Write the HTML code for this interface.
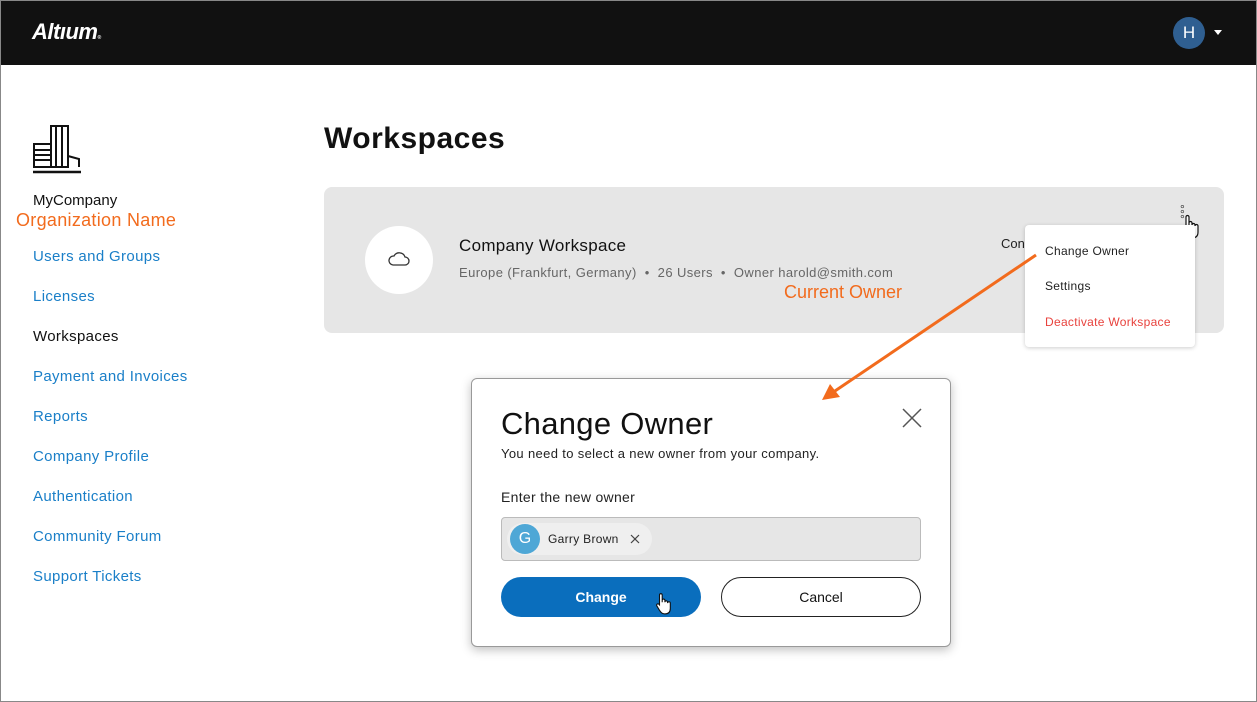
<!DOCTYPE html>
<html><head><style>
body{margin:0;width:1257px;height:702px;position:relative;overflow:hidden;font-family:"Liberation Sans",sans-serif;background:#fff}
.frame{position:absolute;inset:0;border:1px solid #888;pointer-events:none;z-index:10}
.top{position:absolute;left:0;top:0;width:1257px;height:65px;background:#111}
.a{position:absolute}
.nav{position:absolute;left:33px;font-size:15px;color:#1a7fc8;letter-spacing:0.35px}
</style></head><body>
<div class="frame"></div>
<div class="top">
<div class="a" style="left:32px;top:19px;color:#fff;font-size:22px;font-weight:bold;font-style:italic;letter-spacing:-0.5px">Altıum<span style="font-size:5px">®</span></div>
<div class="a" style="left:1173px;top:17px;width:32px;height:32px;border-radius:50%;background:#2f5f91;color:#fff;font-size:17px;text-align:center;line-height:32px">H</div>
<div class="a" style="left:1214px;top:30px;width:0;height:0;border-left:4px solid transparent;border-right:4px solid transparent;border-top:5px solid #fff"></div>
</div>
<svg class="a" style="left:32px;top:124px" width="50" height="50" viewBox="0 0 50 50" fill="none" stroke="#111" stroke-width="2">
<rect x="19" y="2" width="17" height="41"/><line x1="24" y1="2" x2="24" y2="43"/><line x1="30" y1="2" x2="30" y2="43"/>
<rect x="2" y="20" width="17" height="23"/><line x1="2" y1="26" x2="19" y2="26"/><line x1="2" y1="31" x2="19" y2="31"/><line x1="2" y1="36" x2="19" y2="36"/>
<path d="M36 32 L47 35 V43"/><line x1="1" y1="48" x2="49" y2="48" stroke-width="2.5"/></svg>
<div class="a" style="left:33px;top:192px;font-size:15px;color:#111">MyCompany</div>
<div class="a" style="left:16px;top:210px;font-size:18px;color:#f26b1d;letter-spacing:0.3px">Organization Name</div>
<div class="nav" style="top:248px">Users and Groups</div>
<div class="nav" style="top:288px">Licenses</div>
<div class="nav" style="top:328px;color:#111">Workspaces</div>
<div class="nav" style="top:368px">Payment and Invoices</div>
<div class="nav" style="top:408px">Reports</div>
<div class="nav" style="top:448px">Company Profile</div>
<div class="nav" style="top:488px">Authentication</div>
<div class="nav" style="top:528px">Community Forum</div>
<div class="nav" style="top:568px">Support Tickets</div>
<div class="a" style="left:324px;top:122px;font-size:30px;font-weight:bold;color:#111;letter-spacing:0.5px">Workspaces</div>
<div class="a" style="left:324px;top:187px;width:900px;height:146px;background:#e6e6e6;border-radius:8px"></div>
<div class="a" style="left:365px;top:226px;width:68px;height:68px;border-radius:50%;background:#fff"></div>
<svg class="a" style="left:387px;top:250px" width="24" height="18" viewBox="0 0 24 18" fill="none" stroke="#333" stroke-width="1.3"><path d="M6 15 H18 A4 4 0 0 0 18 7 A6 6 0 0 0 7 6 A4.5 4.5 0 0 0 6 15Z"/></svg>
<div class="a" style="left:459px;top:236px;font-size:17px;color:#111;letter-spacing:0.3px">Company Workspace</div>
<div class="a" style="left:459px;top:265px;font-size:13px;color:#666;letter-spacing:0.4px">Europe (Frankfurt, Germany) &nbsp;•&nbsp; 26 Users &nbsp;•&nbsp; Owner harold@smith.com</div>
<div class="a" style="left:784px;top:282px;font-size:18px;color:#f26b1d">Current Owner</div>
<div class="a" style="left:1001px;top:236px;font-size:13px;color:#222">Con</div>
<div class="a" style="left:1180px;top:207px;font-size:12px;color:#333;line-height:5px">°<br>°<br>°</div>
<svg class="a" style="left:1181px;top:214px" width="20" height="26" viewBox="0 0 20 26" fill="#fff" stroke="#111" stroke-width="1.2"><path d="M5 14 V3 a1.5 1.5 0 0 1 3 0 V11 V9 a1.5 1.5 0 0 1 3 0 V11 a1.5 1.5 0 0 1 3 0 V12 a1.5 1.5 0 0 1 3 0 V18 c0 4 -2 6 -6 6 c-3 0 -4 -1 -6 -4 l-3 -5 a1.4 1.4 0 0 1 2.5 -1.5Z"/></svg>
<div class="a" style="left:1025px;top:225px;width:170px;height:122px;background:#fff;border-radius:4px;box-shadow:0 1px 4px rgba(0,0,0,.2)">
<div class="a" style="left:20px;top:19px;font-size:12px;color:#222;letter-spacing:0.3px">Change Owner</div>
<div class="a" style="left:20px;top:54px;font-size:12px;color:#222;letter-spacing:0.3px">Settings</div>
<div class="a" style="left:20px;top:90px;font-size:12px;color:#e8423d;letter-spacing:0.3px">Deactivate Workspace</div></div>
<div class="a" style="left:471px;top:378px;width:478px;height:267px;background:#fff;border:1px solid #999;border-radius:6px;box-shadow:0 3px 10px rgba(0,0,0,.25)">
<div class="a" style="left:29px;top:27px;font-size:31px;color:#111;letter-spacing:0.3px">Change Owner</div>
<div class="a" style="left:29px;top:67px;font-size:13px;color:#222;letter-spacing:0.35px">You need to select a new owner from your company.</div>
<svg class="a" style="left:430px;top:29px" width="20" height="20" stroke="#555" stroke-width="1.5"><line x1="1" y1="1" x2="19" y2="19"/><line x1="19" y1="1" x2="1" y2="19"/></svg>
<div class="a" style="left:29px;top:110px;font-size:14px;color:#222;letter-spacing:0.3px">Enter the new owner</div>
<div class="a" style="left:29px;top:138px;width:418px;height:42px;background:#e6e6e6;border:1px solid #bbb;border-radius:4px">
<div class="a" style="left:5px;top:5px;width:145px;height:32px;background:#efefef;border-radius:16px"></div>
<div class="a" style="left:8px;top:6px;width:30px;height:30px;border-radius:50%;background:#4ea7d6;color:#fff;text-align:center;line-height:30px;font-size:16px">G</div>
<div class="a" style="left:46px;top:14px;font-size:12px;color:#222;letter-spacing:0.3px">Garry Brown</div>
<svg class="a" style="left:128px;top:16px" width="10" height="10" stroke="#444" stroke-width="1.2"><line x1="1" y1="1" x2="9" y2="9"/><line x1="9" y1="1" x2="1" y2="9"/></svg></div>
<div class="a" style="left:29px;top:198px;width:200px;height:40px;border-radius:20px;background:#0a6ebd;color:#fff;font-size:14px;font-weight:bold;text-align:center;line-height:40px">Change</div>
<svg class="a" style="left:183px;top:213px" width="18" height="24" viewBox="0 0 20 26" fill="#fff" stroke="#111" stroke-width="1.2"><path d="M5 14 V3 a1.5 1.5 0 0 1 3 0 V11 V9 a1.5 1.5 0 0 1 3 0 V11 a1.5 1.5 0 0 1 3 0 V12 a1.5 1.5 0 0 1 3 0 V18 c0 4 -2 6 -6 6 c-3 0 -4 -1 -6 -4 l-3 -5 a1.4 1.4 0 0 1 2.5 -1.5Z"/></svg>
<div class="a" style="left:249px;top:198px;width:198px;height:38px;border-radius:20px;border:1px solid #222;color:#111;font-size:14px;text-align:center;line-height:38px">Cancel</div>
</div>
<svg class="a" style="left:0;top:0" width="1257" height="702"><line x1="1036" y1="255" x2="832" y2="393" stroke="#f26b1d" stroke-width="3"/><polygon points="822,400 830,384 840,397" fill="#f26b1d"/></svg>
</body></html>
